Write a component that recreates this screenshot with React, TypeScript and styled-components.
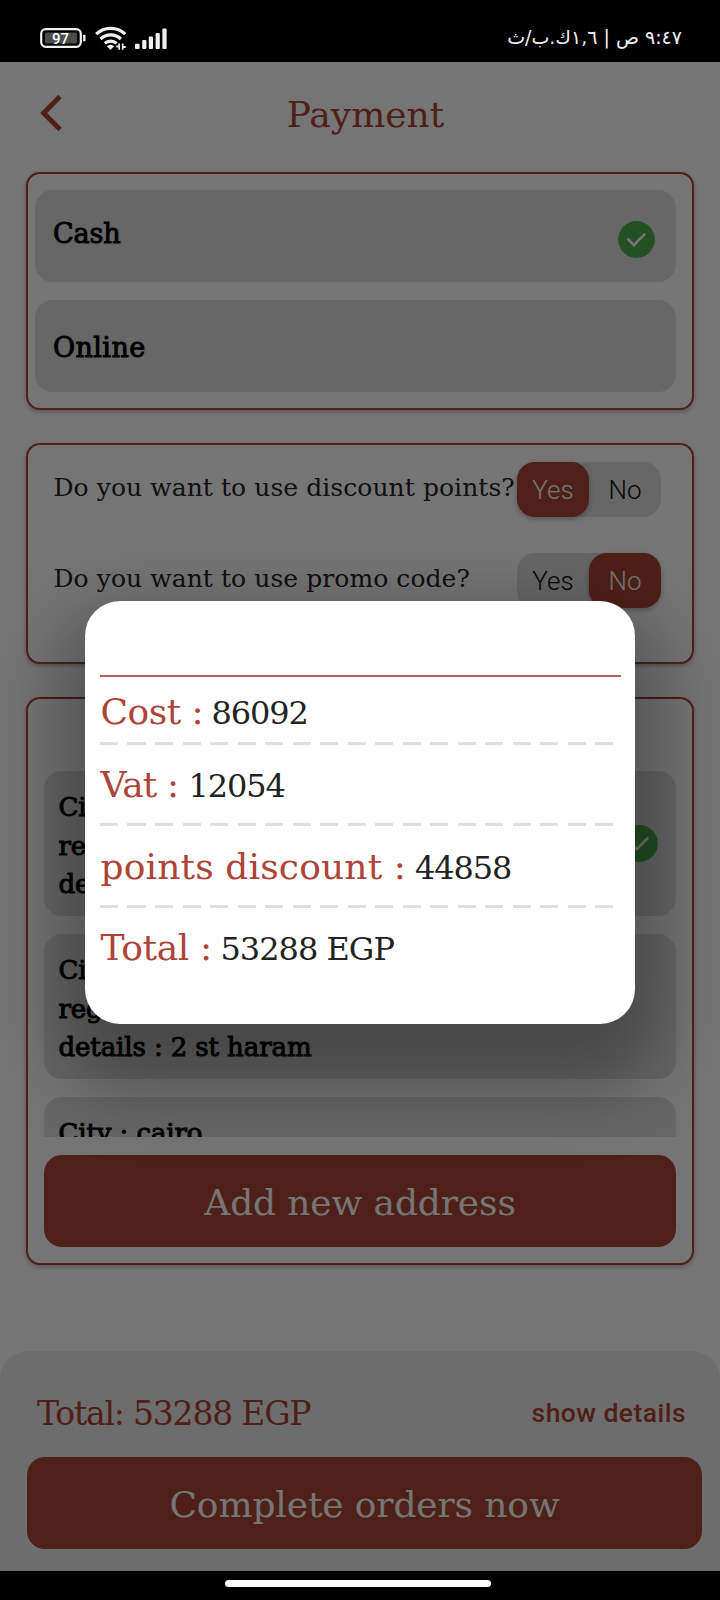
import React from "react";
import styled, { createGlobalStyle } from "styled-components";

const RED = "#ad4437";
const SERIF = '"DejaVu Serif", serif';
const SANS = 'Roboto, "Liberation Sans", sans-serif';

const GlobalStyle = createGlobalStyle`
  *, *::before, *::after { box-sizing: border-box; }
  body { margin: 0; background: #000; }
`;

const Screen = styled.div`
  position: relative;
  display: flex;
  flex-direction: column;
  width: 720px;
  height: 1600px;
  overflow: hidden;
  background: #fff;
  font-family: ${SERIF};
`;

const StatusBar = styled.div`
  display: flex;
  align-items: flex-start;
  justify-content: space-between;
  flex: none;
  height: 62px;
  padding: 26px 38px 0 40px;
  background: #000;
  color: #f0f0f0;
`;

const StatusIcons = styled.svg`
  display: block;
`;

const StatusText = styled.div`
  margin-top: -3px;
  font-family: "DejaVu Sans", sans-serif;
  font-size: 19px;
  line-height: 28px;
  letter-spacing: -1.6px;
  white-space: nowrap;
`;

const Header = styled.header`
  display: flex;
  align-items: center;
  flex: none;
  height: 104px;
  padding: 0 51px 2px 40px;
`;

const Title = styled.h1`
  flex: 1;
  margin: 0;
  padding-top: 2px;
  font-size: 36px;
  font-weight: 400;
  text-align: center;
  color: ${RED};
`;

const Content = styled.main`
  display: flex;
  flex-direction: column;
  flex: 1;
  gap: 33px;
  padding: 6px 26px 0;
`;

const Card = styled.section<{ $height: number; $padding: string }>`
  display: flex;
  flex-direction: column;
  flex: none;
  height: ${(p) => p.$height}px;
  padding: ${(p) => p.$padding};
  border: 2px solid ${RED};
  border-radius: 14px;
  background: #fff;
  box-shadow: 0 2px 4px rgba(0, 0, 0, 0.26);
`;

const Method = styled.div<{ $padding: string }>`
  display: flex;
  align-items: flex-start;
  justify-content: space-between;
  flex: none;
  height: 92px;
  margin-bottom: 18px;
  padding: ${(p) => p.$padding};
  border-radius: 18px;
  background: #e0e0e0;
`;

const CheckSlot = styled.div`
  display: flex;
  padding-top: 6px;
`;

const Strong = styled.span<{ $size?: number; $spacing?: number }>`
  font-size: ${(p) => p.$size ?? 27}px;
  line-height: 38.5px;
  letter-spacing: ${(p) => p.$spacing ?? 0}px;
  color: #000;
  white-space: nowrap;
  -webkit-text-stroke: 1px #000;
`;

const Question = styled.div`
  display: flex;
  align-items: center;
  justify-content: space-between;
  height: 55px;
  margin-bottom: 36px;
`;

const QuestionText = styled.span`
  padding-bottom: 4px;
  font-size: 25px;
  letter-spacing: 0.07px;
  color: #262626;
  white-space: nowrap;
`;

const Toggle = styled.div`
  display: flex;
  flex: none;
  width: 144px;
  height: 55px;
  border-radius: 18px;
  background: #e0e0e0;
`;

const Segment = styled.div<{ $on: boolean }>`
  display: flex;
  align-items: center;
  justify-content: center;
  flex: 1;
  border-radius: 18px;
  font: 300 26px ${SANS};
  color: ${(p) => (p.$on ? "#fff" : "#111")};
  background: ${(p) => (p.$on ? RED : "transparent")};
  box-shadow: ${(p) => (p.$on ? "0 2px 5px rgba(0,0,0,.3)" : "none")};
`;

const AddressList = styled.div`
  display: flex;
  flex-direction: column;
  gap: 18px;
  height: 366px;
  margin-bottom: 18px;
  overflow: hidden;
`;

const Address = styled.div`
  display: flex;
  align-items: center;
  justify-content: space-between;
  flex: none;
  height: 145px;
  padding: 0 18px 0 14.5px;
  border-radius: 18px;
  background: #e0e0e0;
`;

const AddressLines = styled.div`
  display: flex;
  flex-direction: column;
  align-self: flex-start;
  padding-top: 17px;
`;

const Button = styled.div`
  display: flex;
  align-items: center;
  justify-content: center;
  flex: none;
  height: 92px;
  padding-top: 2px;
  border-radius: 18px;
  background: ${RED};
  color: #fff;
  font-size: 36px;
  letter-spacing: -0.12px;
`;

const Sheet = styled.footer`
  flex: none;
  height: 220px;
  padding: 32px 18px 0 27px;
  border-radius: 28px 28px 0 0;
  background: #eee;
  color: ${RED};
`;

const SheetRow = styled.div`
  display: flex;
  align-items: center;
  justify-content: space-between;
  height: 60px;
  margin-bottom: 14px;
  padding: 0 16px 0 10px;
`;

const SheetTotal = styled.span`
  font-size: 33px;
  letter-spacing: -1.2px;
`;

const DetailsLink = styled.span`
  padding-bottom: 2px;
  font: 500 26.5px ${SANS};
  letter-spacing: 0.45px;
`;

const NavBar = styled.div`
  display: flex;
  justify-content: center;
  flex: none;
  height: 29px;
  padding: 9px 4px 0 0;
  background: #000;
`;

const Handle = styled.div`
  width: 266px;
  height: 7px;
  border-radius: 4px;
  background: #fff;
`;

const Scrim = styled.div`
  position: absolute;
  inset: 62px 0 29px;
  display: flex;
  align-items: center;
  justify-content: center;
  padding-bottom: 8px;
  overflow: hidden;
  background: rgba(0, 0, 0, 0.54);
`;

const Dialog = styled.div`
  width: 550px;
  height: 423px;
  padding: 73.5px 14.5px 0;
  border-radius: 35px;
  background: #fff;
  box-shadow: 0 38px 72px 26px rgba(0, 0, 0, 0.31);
`;

const Entry = styled.div<{ $height: number; $top: number }>`
  display: flex;
  align-items: baseline;
  height: ${(p) => p.$height}px;
  padding-top: ${(p) => p.$top}px;
  padding-left: 1px;
  white-space: nowrap;
  line-height: 44px;
`;

const Rule = styled.div`
  height: 2px;
  background: #b5605a;
`;

const Dashes = styled.div`
  height: 3px;
  width: 514px;
  background: repeating-linear-gradient(90deg, #e0e0e0 0 18.3px, transparent 18.3px 27.5px);
`;

const Label = styled.span<{ $spacing: number; $width: number }>`
  flex: none;
  width: ${(p) => p.$width}px;
  font-size: 36px;
  letter-spacing: ${(p) => p.$spacing}px;
  color: ${RED};
`;

const Value = styled.span<{ $spacing: number }>`
  font-size: 32px;
  letter-spacing: ${(p) => p.$spacing}px;
  color: #222;
`;

const Check = () => (
  <svg width="37" height="37" viewBox="0 0 37 37">
    <circle cx="18.5" cy="18.5" r="18.4" fill="#4caf50" />
    <path d="M9.6 17.8l6.3 6.3 11.3-11.5" fill="none" stroke="#fff" strokeWidth="2.7" />
  </svg>
);

const Status = () => (
  <StatusIcons width="130" height="26" viewBox="0 0 130 26">
    <rect x="1.2" y="3.2" width="39.6" height="17.6" rx="4.5" fill="none" stroke="#f0f0f0" strokeWidth="2.2" />
    <rect x="5" y="6.5" width="32" height="11" rx="1.5" fill="#4b4b4b" />
    <path d="M44.3 8.8v6.4" stroke="#f0f0f0" strokeWidth="2.4" />
    <text x="20.6" y="17.5" textAnchor="middle" fontFamily="Roboto, sans-serif" fontSize="15" fontWeight="500" fill="#fff">
      97
    </text>
    <g fill="none" stroke="#f0f0f0" strokeWidth="3.2">
      <path d="M56.2 8.2a21 21 0 0 1 29 0" />
      <path d="M60.5 13a14.8 14.8 0 0 1 20.4 0" />
      <path d="M64.8 17.4a8.6 8.6 0 0 1 11.8 0" />
    </g>
    <path d="M66.8 20.3a5.3 5.3 0 0 1 7.4 0l-3.7 3.6z" fill="#f0f0f0" />
    <path d="M79.2 17.5v6.3M82.7 17.5v6.3" stroke="#f0f0f0" strokeWidth="1.7" />
    <path d="M76.4 20.5h3M82.7 21h3" stroke="#f0f0f0" strokeWidth="2" />
    <g fill="#f0f0f0">
      <rect x="95" y="17.8" width="4.6" height="5.2" rx="1" />
      <rect x="102.2" y="14" width="4.2" height="9" rx="1" />
      <rect x="108.8" y="10.5" width="4.2" height="12.5" rx="1" />
      <rect x="115.6" y="7" width="4.2" height="16" rx="1" />
      <rect x="122.4" y="2.5" width="4.2" height="20.5" rx="1" />
    </g>
  </StatusIcons>
);

const YesNo = ({ yes }: { yes: boolean }) => (
  <Toggle>
    <Segment $on={yes}>Yes</Segment>
    <Segment $on={!yes}>No</Segment>
  </Toggle>
);

const addresses = [
  ["City : cairo", "region : haram", "details : 2 st haram"],
  ["City : cairo", "region : haram", "details : 2 st haram"],
  ["City : cairo"],
];

export default function App() {
  return (
    <Screen>
      <GlobalStyle />
      <StatusBar>
        <Status />
        <StatusText dir="rtl">٩:٤٧ ص | ١,٦ك.ب/ث</StatusText>
      </StatusBar>
      <Header>
        <svg width="22" height="36" viewBox="0 0 22 36">
          <path d="M20 1.5L3.6 18 20 34.5" fill="none" stroke={RED} strokeWidth="4.9" />
        </svg>
        <Title>Payment</Title>
      </Header>
      <Content>
        <Card $height={238} $padding="16px 16px 0 7px">
          <Method $padding="25px 21.5px 0 18px">
            <Strong $spacing={-0.1}>Cash</Strong>
            <CheckSlot>
              <Check />
            </CheckSlot>
          </Method>
          <Method $padding="29px 21.5px 0 18px">
            <Strong $spacing={0.4}>Online</Strong>
          </Method>
        </Card>
        <Card $height={221} $padding="17px 31px 0 25.5px">
          <Question>
            <QuestionText>Do you want to use discount points?</QuestionText>
            <YesNo yes />
          </Question>
          <Question>
            <QuestionText>Do you want to use promo code?</QuestionText>
            <YesNo yes={false} />
          </Question>
        </Card>
        <Card $height={568} $padding="72px 16px 0">
          <AddressList>
            {addresses.map((lines, i) => (
              <Address key={i}>
                <AddressLines>
                  {lines.map((line) => (
                    <Strong key={line} $size={26} $spacing={-0.1}>
                      {line}
                    </Strong>
                  ))}
                </AddressLines>
                {i === 0 && <Check />}
              </Address>
            ))}
          </AddressList>
          <Button>Add new address</Button>
        </Card>
      </Content>
      <Sheet>
        <SheetRow>
          <SheetTotal>Total: 53288 EGP</SheetTotal>
          <DetailsLink>show details</DetailsLink>
        </SheetRow>
        <Button>Complete orders now</Button>
      </Sheet>
      <NavBar>
        <Handle />
      </NavBar>
      <Scrim>
        <Dialog>
          <Rule />
          <Entry $height={65} $top={13}>
            <Label $spacing={-0.5} $width={111}>Cost :</Label>
            <Value $spacing={-1.1}>86092</Value>
          </Entry>
          <Dashes />
          <Entry $height={78.5} $top={18.5}>
            <Label $spacing={-0.9} $width={88}>Vat :</Label>
            <Value $spacing={-1.1}>12054</Value>
          </Entry>
          <Dashes />
          <Entry $height={78.5} $top={18.5}>
            <Label $spacing={0.15} $width={314.5}>points discount :</Label>
            <Value $spacing={-1.1}>44858</Value>
          </Entry>
          <Dashes />
          <Entry $height={79} $top={18.5}>
            <Label $spacing={-0.4} $width={120}>Total :</Label>
            <Value $spacing={-1}>53288 EGP</Value>
          </Entry>
        </Dialog>
      </Scrim>
    </Screen>
  );
}
